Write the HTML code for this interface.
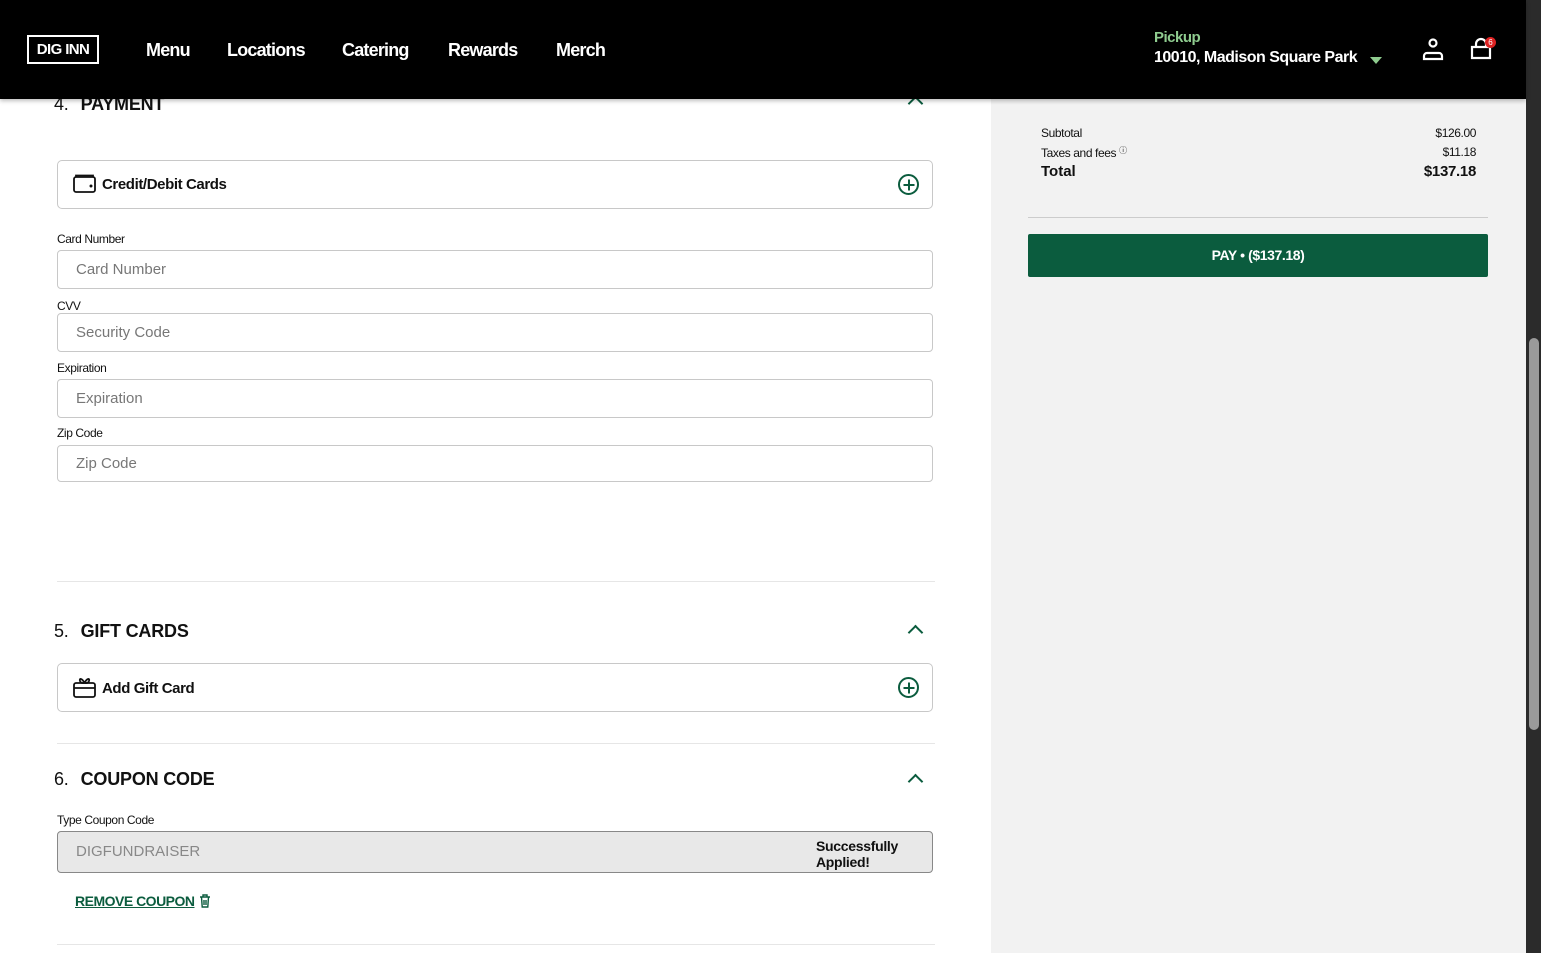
<!DOCTYPE html>
<html><head><meta charset="utf-8"><style>
*{box-sizing:border-box;margin:0;padding:0}
body{width:1541px;height:953px;overflow:hidden;background:#fff;font-family:"Liberation Sans",sans-serif;color:#111;position:relative}
.abs{position:absolute}
.hdr{left:0;top:0;width:1526px;height:99px;background:#000;z-index:5;box-shadow:0 2px 4px rgba(0,0,0,.25)}
.logo{left:27px;top:35px;width:72px;height:29px;border:2px solid #fff;color:#fff;font-weight:bold;font-size:15px;letter-spacing:-.6px;text-align:center;line-height:25px}
.nav{top:40px;color:#fff;font-weight:bold;font-size:18px;letter-spacing:-.8px}
.right{left:991px;top:0;width:535px;height:953px;background:#f2f2f2}
.sb{left:1526px;top:0;width:15px;height:953px;background:#2b2b2b}
.thumb{left:1529px;top:338px;width:10px;height:392px;background:#9a9a9a;border-radius:5px}
.h{font-size:18px;font-weight:bold;letter-spacing:-.2px}
.h span{font-weight:normal;margin-right:12px}
.box{left:57px;width:876px;border:1px solid #c8c8c8;border-radius:5px;background:#fff}
.lbl{left:57px;font-size:12px;letter-spacing:-.4px}
.inp{left:57px;width:876px;height:39px;border:1px solid #c8c8c8;border-radius:4px;font-size:15px;color:#777;padding-left:18px;line-height:37px}
.hr{left:57px;width:878px;height:1px;background:#e6e6e6}
.plus{left:898px;width:21px;height:21px;border:2px solid #0b5c3e;border-radius:50%}
.plus:before,.plus:after{content:"";position:absolute;background:#0b5c3e;left:50%;top:50%;transform:translate(-50%,-50%)}
.plus:before{width:11px;height:2px}.plus:after{width:2px;height:11px}
.chev{left:910px;width:11px;height:11px;border-left:2px solid #0b5c3e;border-top:2px solid #0b5c3e;transform:rotate(45deg)}
.bt{font-size:15px;font-weight:bold;letter-spacing:-.4px}
</style></head><body>
<div class="abs right"></div>
<div class="abs hdr">
 <div class="abs logo">DIG INN</div>
 <div class="abs nav" style="left:146px">Menu</div>
 <div class="abs nav" style="left:227px">Locations</div>
 <div class="abs nav" style="left:342px">Catering</div>
 <div class="abs nav" style="left:448px">Rewards</div>
 <div class="abs nav" style="left:556px">Merch</div>
 <div class="abs" style="left:1154px;top:29px;color:#8fcc8f;font-weight:bold;font-size:15px;letter-spacing:-.5px">Pickup</div>
 <div class="abs" style="left:1154px;top:49px;color:#fff;font-weight:bold;font-size:16px;letter-spacing:-.5px">10010, Madison Square Park</div>
 <div class="abs" style="left:1370px;top:57px;width:0;height:0;border-left:6px solid transparent;border-right:6px solid transparent;border-top:7px solid #8fcc8f"></div>
 <svg class="abs" style="left:1421px;top:37px" width="24" height="24" viewBox="0 0 24 24" fill="none" stroke="#fff" stroke-width="2.2"><circle cx="12" cy="6" r="3.5"/><path d="M3 22v-3a3 3 0 0 1 3-3h12a3 3 0 0 1 3 3v3z"/></svg>
 <svg class="abs" style="left:1469px;top:37px" width="24" height="24" viewBox="0 0 24 24" fill="none" stroke="#fff" stroke-width="2.2"><path d="M3 10h18v11H3z"/><path d="M7 10V7a5 5 0 0 1 10 0v3"/></svg>
 <div class="abs" style="left:1485px;top:37px;width:11px;height:11px;border-radius:50%;background:#d22;color:#fff;font-size:8px;text-align:center;line-height:11px">6</div>
</div>
<div class="abs sb"></div><div class="abs thumb"></div>

<div class="abs h" style="left:54px;top:94px"><span>4.</span>PAYMENT</div>
<div class="abs chev" style="top:98px"></div>
<div class="abs box" style="top:160px;height:49px"></div>
<svg class="abs" style="left:73px;top:174px" width="23" height="20" viewBox="0 0 23 20" fill="none" stroke="#111" stroke-width="1.8"><rect x="1" y="3" width="21" height="15" rx="2"/><path d="M3 3V1.5h17V3"/><circle cx="18" cy="12" r=".6" fill="#111"/></svg>
<div class="abs bt" style="left:102px;top:176px">Credit/Debit Cards</div>
<div class="abs plus" style="top:174px"></div>
<div class="abs lbl" style="top:232px">Card Number</div>
<div class="abs inp" style="top:250px">Card Number</div>
<div class="abs lbl" style="top:299px">CVV</div>
<div class="abs inp" style="top:313px">Security Code</div>
<div class="abs lbl" style="top:361px">Expiration</div>
<div class="abs inp" style="top:379px">Expiration</div>
<div class="abs lbl" style="top:426px">Zip Code</div>
<div class="abs inp" style="top:445px;height:37px;line-height:35px">Zip Code</div>
<div class="abs hr" style="top:581px"></div>

<div class="abs h" style="left:54px;top:621px"><span>5.</span>GIFT CARDS</div>
<div class="abs chev" style="top:627px"></div>
<div class="abs box" style="top:663px;height:49px"></div>
<svg class="abs" style="left:73px;top:676px" width="23" height="22" viewBox="0 0 23 22" fill="none" stroke="#111" stroke-width="1.8"><rect x="1" y="7" width="21" height="14" rx="2"/><path d="M1 12h21M11.5 7C9 2 6 2 7 5s4 2 4.5 2M11.5 7C14 2 17 2 16 5s-4 2-4.5 2"/></svg>
<div class="abs bt" style="left:102px;top:680px">Add Gift Card</div>
<div class="abs plus" style="top:677px"></div>
<div class="abs hr" style="top:743px"></div>

<div class="abs h" style="left:54px;top:769px"><span>6.</span>COUPON CODE</div>
<div class="abs chev" style="top:776px"></div>
<div class="abs lbl" style="top:813px">Type Coupon Code</div>
<div class="abs inp" style="top:831px;height:42px;line-height:40px;background:#e8e8e8;border-color:#888;color:#888">DIGFUNDRAISER</div>
<div class="abs" style="left:816px;top:838px;font-size:14px;font-weight:bold;line-height:16px;letter-spacing:-.3px">Successfully<br>Applied!</div>
<div class="abs" style="left:75px;top:893px;font-size:14px;font-weight:bold;letter-spacing:-.5px;color:#0b5c3e;text-decoration:underline">REMOVE COUPON</div>
<svg class="abs" style="left:199px;top:894px" width="12" height="14" viewBox="0 0 12 14" fill="none" stroke="#0b5c3e" stroke-width="1.4"><path d="M1 3h10M4 3V1h4v2M2.5 3l.7 10h5.6l.7-10M5 6v5M7 6v5"/></svg>
<div class="abs hr" style="top:944px"></div>

<div class="abs" style="left:1041px;top:126px;font-size:12px;letter-spacing:-.4px">Subtotal</div>
<div class="abs" style="left:1041px;top:145px;font-size:12px;letter-spacing:-.4px">Taxes and fees <span style="font-size:8px;vertical-align:4px">ⓘ</span></div>
<div class="abs" style="left:1041px;top:163px;font-size:15px;font-weight:bold">Total</div>
<div class="abs" style="right:65px;top:126px;font-size:12px;letter-spacing:-.4px">$126.00</div>
<div class="abs" style="right:65px;top:145px;font-size:12px;letter-spacing:-.4px">$11.18</div>
<div class="abs" style="right:65px;top:163px;font-size:15px;font-weight:bold;letter-spacing:-.3px">$137.18</div>
<div class="abs" style="left:1028px;top:217px;width:460px;height:1px;background:#ccc"></div>
<div class="abs" style="left:1028px;top:234px;width:460px;height:43px;background:#0b5c3e;border-radius:2px;color:#fff;font-weight:bold;font-size:14px;letter-spacing:-.4px;text-align:center;line-height:43px">PAY • ($137.18)</div>
</body></html>
